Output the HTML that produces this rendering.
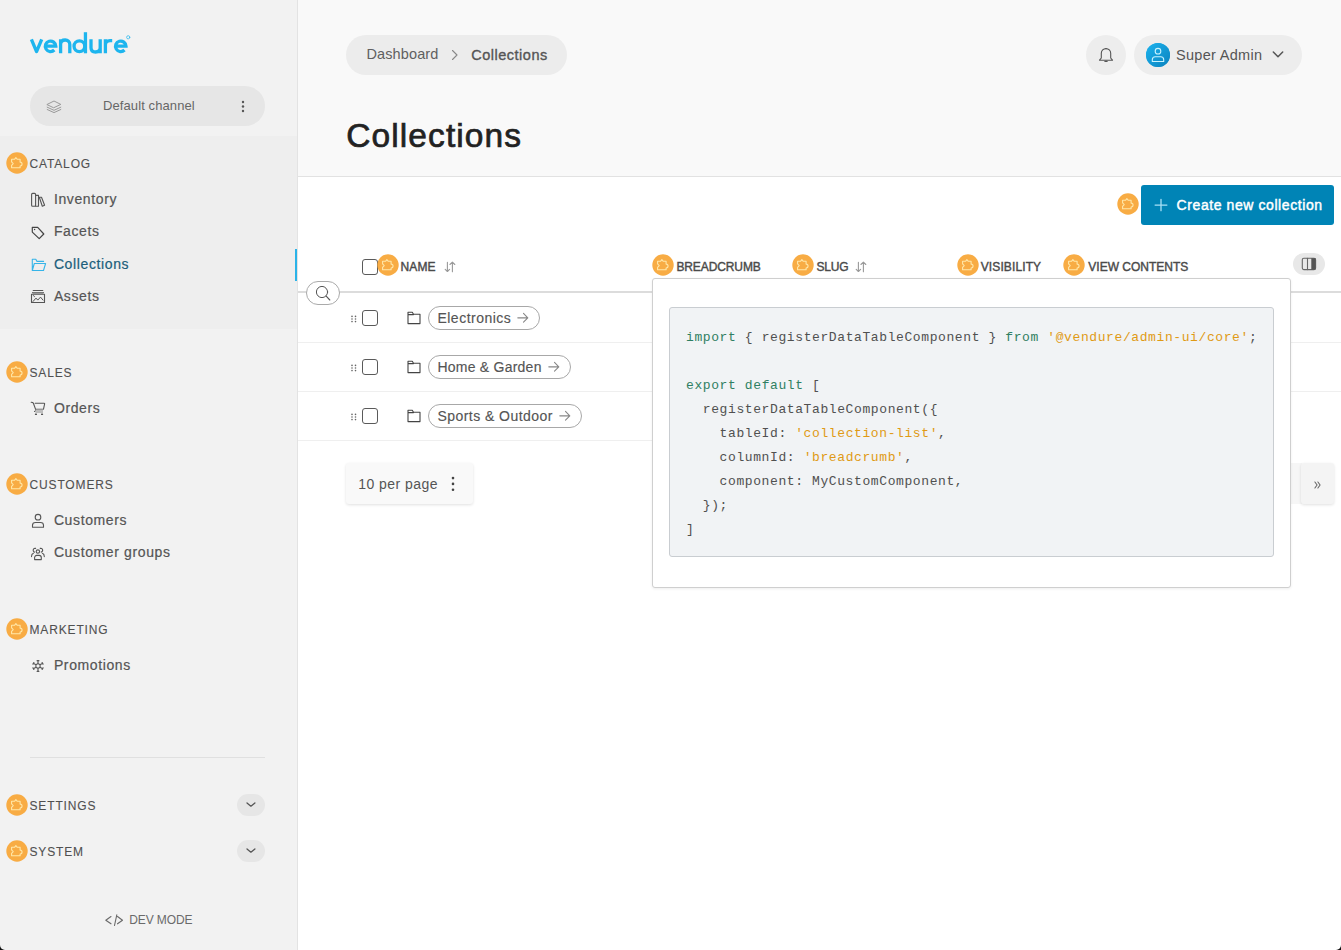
<!DOCTYPE html>
<html><head><meta charset="utf-8"><title>Collections</title>
<style>html,body{margin:0;padding:0;width:1341px;height:950px;overflow:hidden;background:#fff;font-family:"Liberation Sans",sans-serif}</style>
</head><body>
<div style="position:absolute;left:0px;top:0px;width:297px;height:950px;background:#f2f2f2"></div>
<div style="position:absolute;left:0px;top:136px;width:297px;height:193px;background:#eeeeee"></div>
<div style="position:absolute;left:297px;top:0px;width:1px;height:950px;background:#e3e3e3"></div>
<div style="position:absolute;left:298px;top:0px;width:1043px;height:176px;background:#f9f9f9"></div>
<div style="position:absolute;left:298px;top:176px;width:1043px;height:1px;background:#e2e2e2"></div>
<div style="position:absolute;left:298px;top:177px;width:1043px;height:773px;background:#ffffff"></div>
<svg style="position:absolute;left:0px;top:0px;" width="140" height="60" viewBox="0 0 140 60" fill="none" stroke-linecap="round" stroke-linejoin="round"><g stroke="#1db5ee" stroke-width="3.3" stroke-linecap="butt" stroke-linejoin="miter"><path d="M31.4 39.3L36.55 51.6L41.7 39.3" stroke-linejoin="round"/><path d="M45.4 46.2H55.8A5.25 5.25 0 1 0 54.3 50"/><path d="M60.6 39.2V53.3M60.6 44.3C60.6 41.5 62.6 40 65.2 40S69.8 41.6 69.8 44.5V53.3"/><circle cx="79.4" cy="46.3" r="5.35"/><path d="M85.45 32.2V53.3"/><path d="M91 39.2V47.8C91 50.6 93 52 95.6 52S100.2 50.5 100.2 47.6V39.2M100.2 48V53.3"/><path d="M105.4 39.2V53.3M105.4 45C105.4 41.6 107.4 40.6 110 40.6H112.2"/><path d="M115.6 46.2H126A5.25 5.25 0 1 0 124.5 50"/></g><circle cx="128.2" cy="37.3" r="1.6" stroke="#1db5ee" stroke-width="0.7"/></svg>
<div style="position:absolute;left:30px;top:86px;width:235px;height:40px;background:#e6e6e6;border-radius:20px"></div>
<div style="position:absolute;left:103px;top:99.30px;font:400 13px/1 'Liberation Sans', sans-serif;color:#666;letter-spacing:0.1px;white-space:pre;">Default channel</div>
<svg style="position:absolute;left:6px;top:152px" width="22" height="22" viewBox="0 0 22 22"><circle cx="11" cy="11" r="10.7" fill="#f8ac44"/><path d="M5.6 7.3H8.5L9.9 5.6L11.3 7.3H14.1V10.1A1.95 1.95 0 0 1 14.1 14V15.7H5.6V13.4L7.2 11.6L5.6 9.8Z" fill="none" stroke="#ffe7a8" stroke-width="1.1" stroke-linejoin="round"/></svg>
<div style="position:absolute;left:29.5px;top:158.04px;font:400 12px/1 'Liberation Sans', sans-serif;color:#505050;letter-spacing:0.85px;white-space:pre;-webkit-text-stroke:0.1px #505050">CATALOG</div>
<svg style="position:absolute;left:6px;top:361px" width="22" height="22" viewBox="0 0 22 22"><circle cx="11" cy="11" r="10.7" fill="#f8ac44"/><path d="M5.6 7.3H8.5L9.9 5.6L11.3 7.3H14.1V10.1A1.95 1.95 0 0 1 14.1 14V15.7H5.6V13.4L7.2 11.6L5.6 9.8Z" fill="none" stroke="#ffe7a8" stroke-width="1.1" stroke-linejoin="round"/></svg>
<div style="position:absolute;left:29.5px;top:366.94px;font:400 12px/1 'Liberation Sans', sans-serif;color:#505050;letter-spacing:0.85px;white-space:pre;-webkit-text-stroke:0.1px #505050">SALES</div>
<svg style="position:absolute;left:6px;top:473px" width="22" height="22" viewBox="0 0 22 22"><circle cx="11" cy="11" r="10.7" fill="#f8ac44"/><path d="M5.6 7.3H8.5L9.9 5.6L11.3 7.3H14.1V10.1A1.95 1.95 0 0 1 14.1 14V15.7H5.6V13.4L7.2 11.6L5.6 9.8Z" fill="none" stroke="#ffe7a8" stroke-width="1.1" stroke-linejoin="round"/></svg>
<div style="position:absolute;left:29.5px;top:479.04px;font:400 12px/1 'Liberation Sans', sans-serif;color:#505050;letter-spacing:0.85px;white-space:pre;-webkit-text-stroke:0.1px #505050">CUSTOMERS</div>
<svg style="position:absolute;left:6px;top:617.8px" width="22" height="22" viewBox="0 0 22 22"><circle cx="11" cy="11" r="10.7" fill="#f8ac44"/><path d="M5.6 7.3H8.5L9.9 5.6L11.3 7.3H14.1V10.1A1.95 1.95 0 0 1 14.1 14V15.7H5.6V13.4L7.2 11.6L5.6 9.8Z" fill="none" stroke="#ffe7a8" stroke-width="1.1" stroke-linejoin="round"/></svg>
<div style="position:absolute;left:29.5px;top:623.74px;font:400 12px/1 'Liberation Sans', sans-serif;color:#505050;letter-spacing:0.85px;white-space:pre;-webkit-text-stroke:0.1px #505050">MARKETING</div>
<svg style="position:absolute;left:6px;top:794px" width="22" height="22" viewBox="0 0 22 22"><circle cx="11" cy="11" r="10.7" fill="#f8ac44"/><path d="M5.6 7.3H8.5L9.9 5.6L11.3 7.3H14.1V10.1A1.95 1.95 0 0 1 14.1 14V15.7H5.6V13.4L7.2 11.6L5.6 9.8Z" fill="none" stroke="#ffe7a8" stroke-width="1.1" stroke-linejoin="round"/></svg>
<div style="position:absolute;left:29.5px;top:800.34px;font:400 12px/1 'Liberation Sans', sans-serif;color:#505050;letter-spacing:0.85px;white-space:pre;-webkit-text-stroke:0.1px #505050">SETTINGS</div>
<svg style="position:absolute;left:6px;top:840px" width="22" height="22" viewBox="0 0 22 22"><circle cx="11" cy="11" r="10.7" fill="#f8ac44"/><path d="M5.6 7.3H8.5L9.9 5.6L11.3 7.3H14.1V10.1A1.95 1.95 0 0 1 14.1 14V15.7H5.6V13.4L7.2 11.6L5.6 9.8Z" fill="none" stroke="#ffe7a8" stroke-width="1.1" stroke-linejoin="round"/></svg>
<div style="position:absolute;left:29.5px;top:846.14px;font:400 12px/1 'Liberation Sans', sans-serif;color:#505050;letter-spacing:0.85px;white-space:pre;-webkit-text-stroke:0.1px #505050">SYSTEM</div>
<div style="position:absolute;left:53.9px;top:192.15px;font:400 14px/1 'Liberation Sans', sans-serif;color:#555;letter-spacing:0.62px;white-space:pre;-webkit-text-stroke:0.2px #555">Inventory</div>
<div style="position:absolute;left:53.9px;top:224.05px;font:400 14px/1 'Liberation Sans', sans-serif;color:#555;letter-spacing:0.62px;white-space:pre;-webkit-text-stroke:0.2px #555">Facets</div>
<div style="position:absolute;left:53.9px;top:256.95px;font:400 14px/1 'Liberation Sans', sans-serif;color:#1b5e7b;letter-spacing:0.62px;white-space:pre;-webkit-text-stroke:0.2px #1b5e7b">Collections</div>
<div style="position:absolute;left:53.9px;top:289.05px;font:400 14px/1 'Liberation Sans', sans-serif;color:#555;letter-spacing:0.62px;white-space:pre;-webkit-text-stroke:0.2px #555">Assets</div>
<div style="position:absolute;left:53.9px;top:401.35px;font:400 14px/1 'Liberation Sans', sans-serif;color:#555;letter-spacing:0.62px;white-space:pre;-webkit-text-stroke:0.2px #555">Orders</div>
<div style="position:absolute;left:53.9px;top:513.45px;font:400 14px/1 'Liberation Sans', sans-serif;color:#555;letter-spacing:0.62px;white-space:pre;-webkit-text-stroke:0.2px #555">Customers</div>
<div style="position:absolute;left:53.9px;top:545.15px;font:400 14px/1 'Liberation Sans', sans-serif;color:#555;letter-spacing:0.62px;white-space:pre;-webkit-text-stroke:0.2px #555">Customer groups</div>
<div style="position:absolute;left:53.9px;top:657.85px;font:400 14px/1 'Liberation Sans', sans-serif;color:#555;letter-spacing:0.62px;white-space:pre;-webkit-text-stroke:0.2px #555">Promotions</div>
<div style="position:absolute;left:295px;top:249px;width:2px;height:32px;background:#2bb3e8"></div>
<div style="position:absolute;left:30px;top:757px;width:235px;height:1px;background:#e0e0e0"></div>
<div style="position:absolute;left:237px;top:794px;width:28px;height:22px;background:#e6e6e6;border-radius:11px"></div>
<div style="position:absolute;left:237px;top:840px;width:28px;height:22px;background:#e6e6e6;border-radius:11px"></div>
<div style="position:absolute;left:129.2px;top:913.74px;font:400 12px/1 'Liberation Sans', sans-serif;color:#6a6a6a;letter-spacing:-0.1px;white-space:pre;">DEV MODE</div>
<svg style="position:absolute;left:100px;top:910px;" width="30" height="20" viewBox="0 0 30 20" fill="none" stroke-linecap="round" stroke-linejoin="round"><path d="M11 6.5L5.8 10.2 11 13.8 M17.5 6.5l5 3.7-5 3.6 M16.8 4.8L14.5 15.5" stroke="#6a6a6a" stroke-width="1.1"/></svg>
<svg style="position:absolute;left:44px;top:96px;" width="20" height="20" viewBox="0 0 20 20" fill="none" stroke-linecap="round" stroke-linejoin="round"><path d="M3.2 8.4L10 5l6.8 3.4L10 11.6z M3.2 11.2L10 14.3l6.8-3.1 M3.2 13.5L10 16.6l6.8-3.1" stroke="#9a9a9a" stroke-width="1"/></svg>
<svg style="position:absolute;left:236px;top:96px;" width="14" height="20" viewBox="0 0 14 20" fill="none" stroke-linecap="round" stroke-linejoin="round"><circle cx="7" cy="6" r="1.2" fill="#555"/><circle cx="7" cy="10.5" r="1.2" fill="#555"/><circle cx="7" cy="15" r="1.2" fill="#555"/></svg>
<svg style="position:absolute;left:28px;top:190px;" width="20" height="20" viewBox="0 0 20 20" fill="none" stroke-linecap="round" stroke-linejoin="round"><rect x="3.6" y="3.4" width="4" height="12.9" rx="1" stroke="#555" stroke-width="1.1"/><path d="M7.6 5.4h2.9v10.9H7.6" stroke="#555" stroke-width="1.1"/><path d="M11.3 7.3h2.2l3.1 7.9-2.3 1z" stroke="#555" stroke-width="1.1"/></svg>
<svg style="position:absolute;left:28px;top:222px;" width="20" height="20" viewBox="0 0 20 20" fill="none" stroke-linecap="round" stroke-linejoin="round"><path d="M4.3 5.4h5.4l6.1 6.6-4.6 4.6-6.9-6.5z" stroke="#444" stroke-width="1.2"/><circle cx="6.6" cy="7.5" r=".7" fill="#444"/></svg>
<svg style="position:absolute;left:28px;top:255px;" width="20" height="20" viewBox="0 0 20 20" fill="none" stroke-linecap="round" stroke-linejoin="round"><path d="M4.3 15.5V4.2h3.5l1.2 2.2h6.6 M6.3 8.5h11.3l-2.1 7H4.3z" stroke="#36b4e8" stroke-width="1.1"/></svg>
<svg style="position:absolute;left:28px;top:286px;" width="20" height="20" viewBox="0 0 20 20" fill="none" stroke-linecap="round" stroke-linejoin="round"><path d="M5.2 4.5h9.6 M4.5 6.5h11" stroke="#555" stroke-width="1.1"/><rect x="4.5" y="6.6" width="11" height="1.6" fill="#aaa"/><rect x="3.5" y="8.2" width="13" height="8.3" stroke="#555" stroke-width="1.1"/><path d="M5 15.5l3-3.4 1.8 2 2.7-3 2.5 3" stroke="#555" stroke-width="1"/><path d="M5.3 9.5a1 1 0 0 1 1.2 1.2" stroke="#555" stroke-width="1"/></svg>
<svg style="position:absolute;left:28px;top:398px;" width="20" height="20" viewBox="0 0 20 20" fill="none" stroke-linecap="round" stroke-linejoin="round"><path d="M3.2 4.3c1 0 1.8.2 2.1.7l2.4 6.6c.3.8 0 1.5-1.2 1.9 M7.2 5.3h9c.4 0 .5.3.4.7l-1.1 5.2H7.8" stroke="#555" stroke-width="1.1"/><rect x="7.5" y="11.6" width="7.5" height="3.4" fill="#bdbdbd"/><rect x="6.9" y="15.4" width="2.1" height="1.7" rx=".6" fill="#555"/><rect x="13" y="15.4" width="2.1" height="1.7" rx=".6" fill="#555"/></svg>
<svg style="position:absolute;left:28px;top:510px;" width="20" height="20" viewBox="0 0 20 20" fill="none" stroke-linecap="round" stroke-linejoin="round"><circle cx="10" cy="7.2" r="2.8" stroke="#555" stroke-width="1.1"/><path d="M4.5 17.3v-2c0-1.6 1.5-2.8 3-2.8h5c1.5 0 3 1.2 3 2.8v2z" stroke="#555" stroke-width="1.1"/></svg>
<svg style="position:absolute;left:28px;top:542px;" width="20" height="20" viewBox="0 0 20 20" fill="none" stroke-linecap="round" stroke-linejoin="round"><circle cx="9.9" cy="9.6" r="1.7" stroke="#555" stroke-width="1.1"/><path d="M6.6 17.6v-2c0-1.2.9-2.2 2.1-2.2h2.5c1.2 0 2.1 1 2.1 2.2v2z" stroke="#555" stroke-width="1.1"/><path d="M7.6 6.4A1.9 1.9 0 1 0 6.6 10.1 M5.4 11.2C4.2 11.6 3.5 12.6 3.5 14.6 M12.2 6.4A1.9 1.9 0 1 1 13.2 10.1 M14.4 11.2C15.6 11.6 16.3 12.6 16.3 14.6" stroke="#555" stroke-width="1.1"/></svg>
<svg style="position:absolute;left:28px;top:655px;" width="20" height="20" viewBox="0 0 20 20" fill="none" stroke-linecap="round" stroke-linejoin="round"><path d="M10.00 8.60L12.08 9.80L12.08 12.20L10.00 13.40L7.92 12.20L7.92 9.80Z M10.00 8.60L10.00 5.70 M9.10 5.70L10.90 5.70 M12.08 9.80L14.59 8.35 M14.14 7.57L15.04 9.13 M12.08 12.20L14.59 13.65 M15.04 12.87L14.14 14.43 M10.00 13.40L10.00 16.30 M10.90 16.30L9.10 16.30 M7.92 12.20L5.41 13.65 M5.86 14.43L4.96 12.87 M7.92 9.80L5.41 8.35 M4.96 9.13L5.86 7.57" stroke="#5a5a5a" stroke-width="1.2"/></svg>
<svg style="position:absolute;left:237px;top:794px;" width="28" height="22" viewBox="0 0 28 22" fill="none" stroke-linecap="round" stroke-linejoin="round"><path d="M10 9l3.9 3.2L17.9 9" stroke="#555" stroke-width="1.3"/></svg>
<svg style="position:absolute;left:237px;top:840px;" width="28" height="22" viewBox="0 0 28 22" fill="none" stroke-linecap="round" stroke-linejoin="round"><path d="M10 9l3.9 3.2L17.9 9" stroke="#555" stroke-width="1.3"/></svg>
<div style="position:absolute;left:0px;top:945px;width:5px;height:5px;background:#111"></div>
<div style="position:absolute;left:0px;top:945px;width:5px;height:5px;background:#f2f2f2;border-bottom-left-radius:5px"></div>
<div style="position:absolute;left:346px;top:35px;width:221px;height:40px;background:#ececec;border-radius:20px"></div>
<div style="position:absolute;left:366.4px;top:47.03px;font:400 14.5px/1 'Liberation Sans', sans-serif;color:#606060;letter-spacing:0.13px;white-space:pre;">Dashboard</div>
<div style="position:absolute;left:471.3px;top:48.03px;font:400 14.5px/1 'Liberation Sans', sans-serif;color:#555;letter-spacing:0.5px;white-space:pre;-webkit-text-stroke:0.35px #555">Collections</div>
<div style="position:absolute;left:346.2px;top:118.64px;font:400 33.5px/1 'Liberation Sans', sans-serif;color:#222;letter-spacing:1.1px;white-space:pre;-webkit-text-stroke:0.7px #222">Collections</div>
<div style="position:absolute;left:1086px;top:35px;width:40px;height:40px;background:#ededed;border-radius:20px"></div>
<div style="position:absolute;left:1134px;top:35px;width:168px;height:40px;background:#ededed;border-radius:20px"></div>
<div style="position:absolute;left:1146px;top:43px;width:24px;height:24px;background:linear-gradient(135deg,#28b8ef,#0a86c6);border-radius:12px"></div>
<div style="position:absolute;left:1176px;top:48.13px;font:400 14.5px/1 'Liberation Sans', sans-serif;color:#555;letter-spacing:0.3px;white-space:pre;">Super Admin</div>
<svg style="position:absolute;left:445px;top:45px;" width="20" height="20" viewBox="0 0 20 20" fill="none" stroke-linecap="round" stroke-linejoin="round"><path d="M7.5 5.5l4.5 4.5-4.5 4.5" stroke="#888" stroke-width="1.1"/></svg>
<svg style="position:absolute;left:1096px;top:45px;" width="20" height="20" viewBox="0 0 20 20" fill="none" stroke-linecap="round" stroke-linejoin="round"><path d="M5.3 13V8.3a4.7 4.7 0 0 1 9.4 0V13l1.8 2.2H3.5z" stroke="#555" stroke-width="1.1"/><circle cx="10" cy="3.6" r=".6" fill="#555"/><path d="M9 16.4h2" stroke="#555" stroke-width="1.4"/></svg>
<svg style="position:absolute;left:1144px;top:41px;" width="28" height="28" viewBox="0 0 28 28" fill="none" stroke-linecap="round" stroke-linejoin="round"><defs><linearGradient id="av" x1="0" y1="0" x2="1" y2="1"><stop offset="0" stop-color="#1cb3ee"/><stop offset="1" stop-color="#0a82be"/></linearGradient></defs><circle cx="14" cy="14" r="12" fill="url(#av)"/><circle cx="14" cy="10.2" r="2.8" stroke="#c9f3ff" stroke-width="1.1"/><path d="M8.3 20.5v-1.8c0-1.7 1.3-3 3-3h5.4c1.7 0 3 1.3 3 3v1.8z" stroke="#c9f3ff" stroke-width="1.1"/></svg>
<svg style="position:absolute;left:1268px;top:45px;" width="20" height="20" viewBox="0 0 20 20" fill="none" stroke-linecap="round" stroke-linejoin="round"><path d="M5.3 7L10 11.8 14.7 7" stroke="#555" stroke-width="1.5"/></svg>
<svg style="position:absolute;left:1117px;top:193px" width="22" height="22" viewBox="0 0 22 22"><circle cx="11" cy="11" r="10.7" fill="#f8ac44"/><path d="M5.6 7.3H8.5L9.9 5.6L11.3 7.3H14.1V10.1A1.95 1.95 0 0 1 14.1 14V15.7H5.6V13.4L7.2 11.6L5.6 9.8Z" fill="none" stroke="#ffe7a8" stroke-width="1.1" stroke-linejoin="round"/></svg>
<div style="position:absolute;left:1141px;top:185px;width:193px;height:40px;background:#0084b6;border-radius:3px"></div>
<div style="position:absolute;left:1176.6px;top:197.85px;font:400 14px/1 'Liberation Sans', sans-serif;color:#fff;letter-spacing:0.58px;white-space:pre;-webkit-text-stroke:0.45px #fff">Create new collection</div>
<svg style="position:absolute;left:1148px;top:193px;" width="26" height="24" viewBox="0 0 26 24" fill="none" stroke-linecap="round" stroke-linejoin="round"><path d="M7.1 12.1h11.8 M13 6.3v11.4" stroke="#a8e0f6" stroke-width="1.3"/></svg>
<div style="position:absolute;left:298px;top:291px;width:1043px;height:2px;background:#dcdcdc"></div>
<div style="position:absolute;left:298px;top:342px;width:1043px;height:1px;background:#efefef"></div>
<div style="position:absolute;left:298px;top:391px;width:1043px;height:1px;background:#efefef"></div>
<div style="position:absolute;left:298px;top:440px;width:400px;height:1px;background:#efefef"></div>
<div style="position:absolute;left:362px;top:259px;width:16px;height:16px;box-sizing:border-box;border:1.3px solid #5a5a5a;border-radius:3px;background:#fff"></div>
<svg style="position:absolute;left:377px;top:254px" width="22" height="22" viewBox="0 0 22 22"><circle cx="11" cy="11" r="10.7" fill="#f8ac44"/><path d="M5.6 7.3H8.5L9.9 5.6L11.3 7.3H14.1V10.1A1.95 1.95 0 0 1 14.1 14V15.7H5.6V13.4L7.2 11.6L5.6 9.8Z" fill="none" stroke="#ffe7a8" stroke-width="1.1" stroke-linejoin="round"/></svg>
<div style="position:absolute;left:400.5px;top:260.64px;font:400 12px/1 'Liberation Sans', sans-serif;color:#4a4a4a;letter-spacing:0.12px;white-space:pre;-webkit-text-stroke:0.4px #4a4a4a">NAME</div>
<svg style="position:absolute;left:652px;top:254px" width="22" height="22" viewBox="0 0 22 22"><circle cx="11" cy="11" r="10.7" fill="#f8ac44"/><path d="M5.6 7.3H8.5L9.9 5.6L11.3 7.3H14.1V10.1A1.95 1.95 0 0 1 14.1 14V15.7H5.6V13.4L7.2 11.6L5.6 9.8Z" fill="none" stroke="#ffe7a8" stroke-width="1.1" stroke-linejoin="round"/></svg>
<div style="position:absolute;left:676.4px;top:260.64px;font:400 12px/1 'Liberation Sans', sans-serif;color:#4a4a4a;letter-spacing:-0.1px;white-space:pre;-webkit-text-stroke:0.4px #4a4a4a">BREADCRUMB</div>
<svg style="position:absolute;left:792px;top:254px" width="22" height="22" viewBox="0 0 22 22"><circle cx="11" cy="11" r="10.7" fill="#f8ac44"/><path d="M5.6 7.3H8.5L9.9 5.6L11.3 7.3H14.1V10.1A1.95 1.95 0 0 1 14.1 14V15.7H5.6V13.4L7.2 11.6L5.6 9.8Z" fill="none" stroke="#ffe7a8" stroke-width="1.1" stroke-linejoin="round"/></svg>
<div style="position:absolute;left:816.4px;top:260.64px;font:400 12px/1 'Liberation Sans', sans-serif;color:#4a4a4a;letter-spacing:-0.2px;white-space:pre;-webkit-text-stroke:0.4px #4a4a4a">SLUG</div>
<svg style="position:absolute;left:957px;top:254px" width="22" height="22" viewBox="0 0 22 22"><circle cx="11" cy="11" r="10.7" fill="#f8ac44"/><path d="M5.6 7.3H8.5L9.9 5.6L11.3 7.3H14.1V10.1A1.95 1.95 0 0 1 14.1 14V15.7H5.6V13.4L7.2 11.6L5.6 9.8Z" fill="none" stroke="#ffe7a8" stroke-width="1.1" stroke-linejoin="round"/></svg>
<div style="position:absolute;left:980.7px;top:260.64px;font:400 12px/1 'Liberation Sans', sans-serif;color:#4a4a4a;letter-spacing:0.12px;white-space:pre;-webkit-text-stroke:0.4px #4a4a4a">VISIBILITY</div>
<svg style="position:absolute;left:1063px;top:254px" width="22" height="22" viewBox="0 0 22 22"><circle cx="11" cy="11" r="10.7" fill="#f8ac44"/><path d="M5.6 7.3H8.5L9.9 5.6L11.3 7.3H14.1V10.1A1.95 1.95 0 0 1 14.1 14V15.7H5.6V13.4L7.2 11.6L5.6 9.8Z" fill="none" stroke="#ffe7a8" stroke-width="1.1" stroke-linejoin="round"/></svg>
<div style="position:absolute;left:1088.3px;top:260.64px;font:400 12px/1 'Liberation Sans', sans-serif;color:#4a4a4a;letter-spacing:0.0px;white-space:pre;-webkit-text-stroke:0.4px #4a4a4a">VIEW CONTENTS</div>
<div style="position:absolute;left:1293px;top:253px;width:32px;height:22px;background:#e8e8e8;border-radius:11px"></div>
<svg style="position:absolute;left:1296px;top:254px;" width="26" height="20" viewBox="0 0 26 20" fill="none" stroke-linecap="round" stroke-linejoin="round"><rect x="6.3" y="4.2" width="13.3" height="11.4" rx="1.5" stroke="#666" stroke-width="1.1"/><path d="M11.5 4.2v11.4" stroke="#666" stroke-width="1.1"/><rect x="15.3" y="4.2" width="4.3" height="11.4" fill="#555"/></svg>
<svg style="position:absolute;left:440px;top:257px;" width="20" height="20" viewBox="0 0 20 20" fill="none" stroke-linecap="round" stroke-linejoin="round"><path d="M7.4 5.2v9.3 M5.2 12.3l2.2 2.2 2.2-2.2 M12.4 5.2v9.5 M9.9 7.5l2.5-2.3 2.4 2.3" stroke="#999" stroke-width="1.1"/></svg>
<svg style="position:absolute;left:851px;top:257px;" width="20" height="20" viewBox="0 0 20 20" fill="none" stroke-linecap="round" stroke-linejoin="round"><path d="M7.4 5.2v9.3 M5.2 12.3l2.2 2.2 2.2-2.2 M12.4 5.2v9.5 M9.9 7.5l2.5-2.3 2.4 2.3" stroke="#999" stroke-width="1.1"/></svg>
<div style="position:absolute;left:306px;top:281px;width:34px;height:24px;box-sizing:border-box;border:1px solid #aaa;border-radius:12px;background:#fff"></div>
<svg style="position:absolute;left:310px;top:282px;" width="26" height="22" viewBox="0 0 26 22" fill="none" stroke-linecap="round" stroke-linejoin="round"><circle cx="12" cy="10" r="5.6" stroke="#555" stroke-width="1"/><path d="M16.2 14.2l3.6 3.8" stroke="#555" stroke-width="1.1"/></svg>
<div style="position:absolute;left:362px;top:310px;width:16px;height:16px;box-sizing:border-box;border:1.3px solid #5a5a5a;border-radius:3px;background:#fff"></div>
<div style="position:absolute;left:428px;top:306px;width:112px;height:24px;box-sizing:border-box;border:1px solid #a8a8a8;border-radius:12px"></div>
<div style="position:absolute;left:437.4px;top:310.95px;font:400 14px/1 'Liberation Sans', sans-serif;color:#555;letter-spacing:0.5px;white-space:pre;-webkit-text-stroke:0.15px #555">Electronics</div>
<svg style="position:absolute;left:346px;top:306px;" width="80" height="24" viewBox="0 0 80 24" fill="none" stroke-linecap="round" stroke-linejoin="round"><circle cx="6" cy="10.4" r=".8" fill="#666"/><circle cx="9.5" cy="10.4" r=".8" fill="#666"/><circle cx="6" cy="13" r=".8" fill="#666"/><circle cx="9.5" cy="13" r=".8" fill="#666"/><circle cx="6" cy="15.6" r=".8" fill="#666"/><circle cx="9.5" cy="15.6" r=".8" fill="#666"/><path d="M62 17.6V6.3h4.3l1.2 2H74v9.3z M62 8.6h5.5" stroke="#444" stroke-width="1.1"/></svg>
<svg style="position:absolute;left:513px;top:308px;" width="20" height="20" viewBox="0 0 20 20" fill="none" stroke-linecap="round" stroke-linejoin="round"><path d="M4.8 9.85h10 M10.5 5.4l4.3 4.45-4.3 4.35" stroke="#888" stroke-width="1.1"/></svg>
<div style="position:absolute;left:362px;top:359px;width:16px;height:16px;box-sizing:border-box;border:1.3px solid #5a5a5a;border-radius:3px;background:#fff"></div>
<div style="position:absolute;left:428px;top:355px;width:143px;height:24px;box-sizing:border-box;border:1px solid #a8a8a8;border-radius:12px"></div>
<div style="position:absolute;left:437.4px;top:359.95px;font:400 14px/1 'Liberation Sans', sans-serif;color:#555;letter-spacing:0.24px;white-space:pre;-webkit-text-stroke:0.15px #555">Home &amp; Garden</div>
<svg style="position:absolute;left:346px;top:355px;" width="80" height="24" viewBox="0 0 80 24" fill="none" stroke-linecap="round" stroke-linejoin="round"><circle cx="6" cy="10.4" r=".8" fill="#666"/><circle cx="9.5" cy="10.4" r=".8" fill="#666"/><circle cx="6" cy="13" r=".8" fill="#666"/><circle cx="9.5" cy="13" r=".8" fill="#666"/><circle cx="6" cy="15.6" r=".8" fill="#666"/><circle cx="9.5" cy="15.6" r=".8" fill="#666"/><path d="M62 17.6V6.3h4.3l1.2 2H74v9.3z M62 8.6h5.5" stroke="#444" stroke-width="1.1"/></svg>
<svg style="position:absolute;left:544px;top:357px;" width="20" height="20" viewBox="0 0 20 20" fill="none" stroke-linecap="round" stroke-linejoin="round"><path d="M4.8 9.85h10 M10.5 5.4l4.3 4.45-4.3 4.35" stroke="#888" stroke-width="1.1"/></svg>
<div style="position:absolute;left:362px;top:408px;width:16px;height:16px;box-sizing:border-box;border:1.3px solid #5a5a5a;border-radius:3px;background:#fff"></div>
<div style="position:absolute;left:428px;top:404px;width:154px;height:24px;box-sizing:border-box;border:1px solid #a8a8a8;border-radius:12px"></div>
<div style="position:absolute;left:437.4px;top:408.95px;font:400 14px/1 'Liberation Sans', sans-serif;color:#555;letter-spacing:0.46px;white-space:pre;-webkit-text-stroke:0.15px #555">Sports &amp; Outdoor</div>
<svg style="position:absolute;left:346px;top:404px;" width="80" height="24" viewBox="0 0 80 24" fill="none" stroke-linecap="round" stroke-linejoin="round"><circle cx="6" cy="10.4" r=".8" fill="#666"/><circle cx="9.5" cy="10.4" r=".8" fill="#666"/><circle cx="6" cy="13" r=".8" fill="#666"/><circle cx="9.5" cy="13" r=".8" fill="#666"/><circle cx="6" cy="15.6" r=".8" fill="#666"/><circle cx="9.5" cy="15.6" r=".8" fill="#666"/><path d="M62 17.6V6.3h4.3l1.2 2H74v9.3z M62 8.6h5.5" stroke="#444" stroke-width="1.1"/></svg>
<svg style="position:absolute;left:555px;top:406px;" width="20" height="20" viewBox="0 0 20 20" fill="none" stroke-linecap="round" stroke-linejoin="round"><path d="M4.8 9.85h10 M10.5 5.4l4.3 4.45-4.3 4.35" stroke="#888" stroke-width="1.1"/></svg>
<div style="position:absolute;left:346px;top:463px;width:127px;height:41px;background:#f9f9f9;border-radius:3px;box-shadow:0 1px 3px rgba(0,0,0,.12)"></div>
<div style="position:absolute;left:358.2px;top:476.85px;font:400 14px/1 'Liberation Sans', sans-serif;color:#555;letter-spacing:0.45px;white-space:pre;">10 per page</div>
<svg style="position:absolute;left:443px;top:473px;" width="20" height="22" viewBox="0 0 20 22" fill="none" stroke-linecap="round" stroke-linejoin="round"><circle cx="10" cy="5.1" r="1.3" fill="#444"/><circle cx="10" cy="10.9" r="1.3" fill="#444"/><circle cx="10" cy="16.7" r="1.3" fill="#444"/></svg>
<div style="position:absolute;left:1290px;top:463px;width:12px;height:41px;background:#f6f6f6"></div>
<div style="position:absolute;left:1301px;top:463px;width:33px;height:41px;background:#f4f4f4;border-radius:3px;box-shadow:0 1px 3px rgba(0,0,0,.12)"></div>
<svg style="position:absolute;left:1305px;top:470px;" width="25" height="26" viewBox="0 0 25 26" fill="none" stroke-linecap="round" stroke-linejoin="round"><path d="M9.9 12l2.2 3-2.2 3 M12.9 12l2.2 3-2.2 3" stroke="#666" stroke-width="1.1"/></svg>
<div style="position:absolute;left:1336px;top:945px;width:5px;height:5px;background:#111"></div>
<div style="position:absolute;left:1336px;top:945px;width:5px;height:5px;background:#fff;border-bottom-right-radius:5px"></div>
<div style="position:absolute;left:652px;top:278px;width:639px;height:310px;box-sizing:border-box;background:#fff;border:1px solid #cfcfcf;border-radius:3px;box-shadow:0 1px 3px rgba(0,0,0,.07)"></div>
<div style="position:absolute;left:669px;top:307px;width:605px;height:250px;box-sizing:border-box;background:#f1f3f5;border:1px solid #c9cdd1;border-radius:3px"></div>
<div style="position:absolute;left:686.0px;top:330.50px;font:400 13px/1 'Liberation Mono', monospace;color:#505050;letter-spacing:0.6px;white-space:pre;"><span style="color:#2f7f62">import</span> { registerDataTableComponent } <span style="color:#2f7f62">from</span> <span style="color:#e09a14">'@vendure/admin-ui/core'</span>;</div>
<div style="position:absolute;left:686.0px;top:378.50px;font:400 13px/1 'Liberation Mono', monospace;color:#505050;letter-spacing:0.6px;white-space:pre;"><span style="color:#2f7f62">export</span> <span style="color:#2f7f62">default</span> [</div>
<div style="position:absolute;left:686.0px;top:402.50px;font:400 13px/1 'Liberation Mono', monospace;color:#505050;letter-spacing:0.6px;white-space:pre;">  registerDataTableComponent({</div>
<div style="position:absolute;left:686.0px;top:426.50px;font:400 13px/1 'Liberation Mono', monospace;color:#505050;letter-spacing:0.6px;white-space:pre;">    tableId: <span style="color:#e09a14">'collection-list'</span>,</div>
<div style="position:absolute;left:686.0px;top:450.50px;font:400 13px/1 'Liberation Mono', monospace;color:#505050;letter-spacing:0.6px;white-space:pre;">    columnId: <span style="color:#e09a14">'breadcrumb'</span>,</div>
<div style="position:absolute;left:686.0px;top:474.50px;font:400 13px/1 'Liberation Mono', monospace;color:#505050;letter-spacing:0.6px;white-space:pre;">    component: MyCustomComponent,</div>
<div style="position:absolute;left:686.0px;top:498.50px;font:400 13px/1 'Liberation Mono', monospace;color:#505050;letter-spacing:0.6px;white-space:pre;">  });</div>
<div style="position:absolute;left:686.0px;top:522.50px;font:400 13px/1 'Liberation Mono', monospace;color:#505050;letter-spacing:0.6px;white-space:pre;">]</div>
</body></html>
